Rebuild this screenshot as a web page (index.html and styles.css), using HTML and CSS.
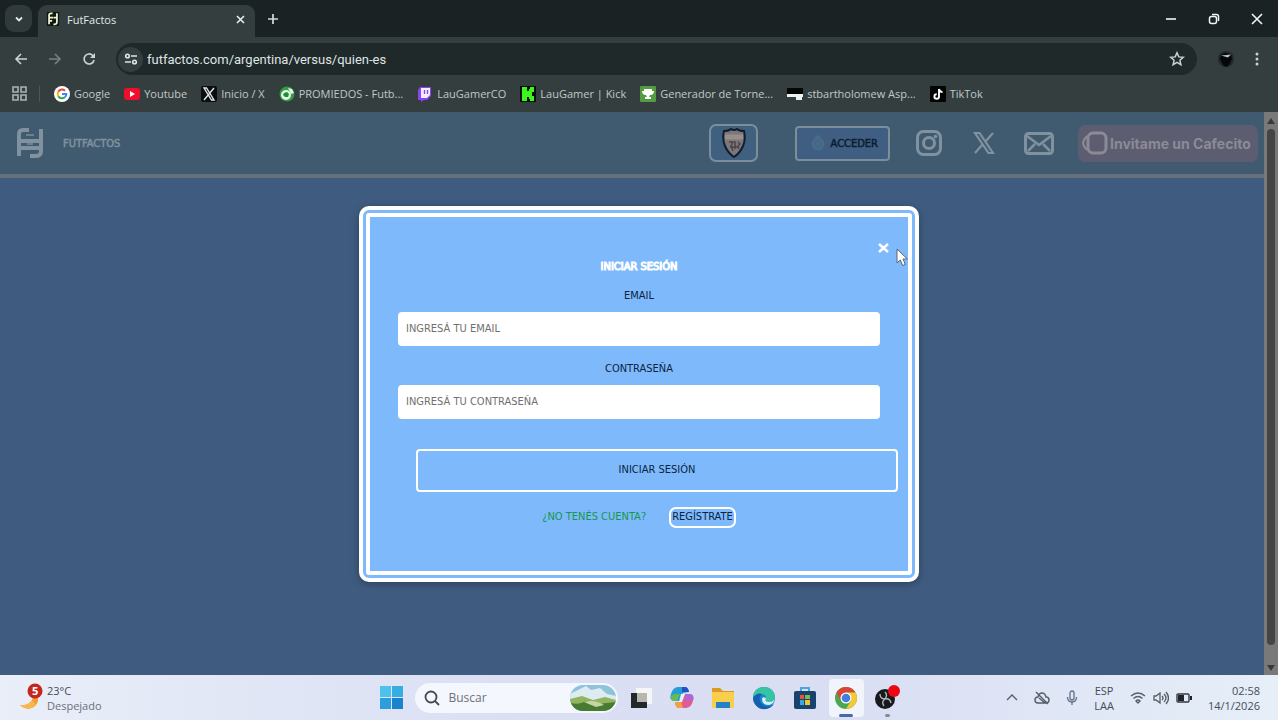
FILE: index.html
```html
<!DOCTYPE html>
<html lang="es">
<head>
  <meta charset="UTF-8">
  <meta name="viewport" content="width=device-width, initial-scale=1.0">
  <title>FutFactos</title>
  <link rel="stylesheet" href="styles.css">
</head>
<body>
  <!-- Tabs -->
  <div class="tab-strip">
    <button class="tab-search" aria-label="Buscar pestañas"><svg width="10" height="10" viewBox="0 0 10 10"><path d="M2 3.5l3 3 3-3" fill="none" stroke="#e3e8e8" stroke-width="1.8"/></svg></button>
    <div class="tab">
      <svg width="14" height="14" viewBox="0 0 28 32"><rect width="28" height="32" fill="#10170f"/><path d="M5 28V7q0-4 5-4h3M5 13h9M5 20h7M23 3v20q0 5-5 5h-3M15 13h8" fill="none" stroke="#f0f5d5" stroke-width="4"/></svg>
      <span>FutFactos</span>
      <button class="icon-btn" aria-label="Cerrar pestaña"><svg width="9" height="9" viewBox="0 0 9 9"><path d="M1 1l7 7M8 1L1 8" stroke="#e8eded" stroke-width="1.6"/></svg></button>
    </div>
    <button class="icon-btn new-tab" aria-label="Nueva pestaña"><svg width="12" height="12" viewBox="0 0 12 12"><path d="M6 1v10M1 6h10" stroke="#d5dbdb" stroke-width="1.7"/></svg></button>
    <div class="window-buttons">
      <button class="icon-btn" aria-label="Minimizar"><svg width="12" height="12" viewBox="0 0 12 12"><path d="M1 6h10" stroke="#f2f5f5" stroke-width="1.6"/></svg></button>
      <button class="icon-btn" aria-label="Restaurar"><svg width="12" height="12" viewBox="0 0 12 12"><rect x="1.5" y="3.5" width="7" height="7" rx="2" fill="none" stroke="#f2f5f5" stroke-width="1.5"/><path d="M4 1.5h4.5q2 0 2 2V8" fill="none" stroke="#f2f5f5" stroke-width="1.5"/></svg></button>
      <button class="icon-btn" aria-label="Cerrar"><svg width="12" height="12" viewBox="0 0 12 12"><path d="M1 1l10 10M11 1L1 11" stroke="#f2f5f5" stroke-width="1.6"/></svg></button>
    </div>
  </div>

  <!-- Toolbar -->
  <div class="toolbar">
    <button class="icon-btn" aria-label="Atrás"><svg width="14" height="14" viewBox="0 0 14 14"><path d="M13 7H2M7 2L2 7l5 5" fill="none" stroke="#ccd3d3" stroke-width="1.6"/></svg></button>
    <button class="icon-btn" aria-label="Adelante"><svg width="14" height="14" viewBox="0 0 14 14"><path d="M1 7h11M7 2l5 5-5 5" fill="none" stroke="#778181" stroke-width="1.6"/></svg></button>
    <button class="icon-btn" aria-label="Recargar"><svg width="14" height="14" viewBox="0 0 14 14"><path d="M12 8a5 5 0 1 1-1.3-4.5L12 5" fill="none" stroke="#ccd3d3" stroke-width="1.7"/><path d="M13 1v5H8z" fill="#ccd3d3"/></svg></button>
    <div class="address-bar">
      <button class="site-info" aria-label="Información del sitio"><svg width="14" height="12" viewBox="0 0 14 12"><g fill="none" stroke="#dfe4e4" stroke-width="1.6"><circle cx="3.5" cy="3" r="1.8"/><path d="M7 3h6M1 9h6"/><circle cx="10.5" cy="9" r="1.8"/></g></svg></button>
      <input type="text" value="futfactos.com/argentina/versus/quien-es" aria-label="Dirección">
      <button class="icon-btn" aria-label="Favorito"><svg width="16" height="16" viewBox="0 0 16 16"><path d="M8 1.8l1.8 4.1 4.5.4-3.4 3 1 4.400L8 11.400l-3.900 2.300 1-4.400-3.400-3 4.500-.4z" fill="none" stroke="#ccd3d3" stroke-width="1.5"/></svg></button>
    </div>
    <button class="icon-btn" aria-label="Perfil"><svg width="18" height="18" viewBox="0 0 18 18"><circle cx="9" cy="9" r="8" fill="#20282a"/><path d="M4 5q5-4 10 0l1 4-3 6-3 2-3-2-3-6z" fill="#050708"/><path d="M4 5.5l10-1-3 3z" fill="#b9bfc4"/></svg></button>
    <button class="icon-btn" aria-label="Menú"><svg width="4" height="14" viewBox="0 0 4 14"><g fill="#ccd3d3"><circle cx="2" cy="2" r="1.5"/><circle cx="2" cy="7" r="1.5"/><circle cx="2" cy="12" r="1.5"/></g></svg></button>
  </div>

  <!-- Bookmarks -->
  <nav class="bookmarks">
    <button class="icon-btn apps" aria-label="Aplicaciones"><svg width="15" height="15" viewBox="0 0 15 15"><path d="M1 1h5v5H1zM9 1h5v5H9zM1 9h5v5H1zM9 9h5v5H9z" fill="none" stroke="#aab4b3" stroke-width="1.6"/></svg></button>
    <a href="#"><svg width="16" height="16" viewBox="0 0 16 16"><circle cx="8" cy="8" r="8" fill="#fff"/><g fill="none" stroke-width="2"><path d="M4.3 5.8A4.3 4.3 0 0 1 11 4.7" stroke="#e94235"/><path d="M4.3 5.8a4.3 4.3 0 0 0 0 4.4" stroke="#fabb05"/><path d="M4.3 10.2a4.3 4.3 0 0 0 6.5 1.1" stroke="#34a853"/><path d="M10.8 11.3A4 4 0 0 0 12.3 8H8" stroke="#4285f4"/></g></svg>Google</a>
    <a href="#"><svg width="16" height="16" viewBox="0 0 16 16"><rect y="2" width="16" height="12" rx="3" fill="#f00d2e"/><path d="M6 5v6l5-3z" fill="#fff"/></svg>Youtube</a>
    <a href="#"><svg width="16" height="16" viewBox="0 0 16 16"><rect width="16" height="16" rx="2" fill="#0a0d0d"/><path d="M3 2h2.5L13 14h-2.5zM13 2L3 14" fill="none" stroke="#dfe4e4" stroke-width="1.4"/></svg>Inicio / X</a>
    <a href="#"><svg width="16" height="16" viewBox="0 0 16 16"><circle cx="8" cy="8" r="7.5" fill="#2e9d45"/><circle cx="7" cy="9" r="5" fill="#e4f6e2"/><path d="M5 7l3-1 2 2-1 3H6L4 9z" fill="#258a3b"/><path d="M9 2l4 1 2 4-3 1z" fill="#e4f6e2"/></svg>PROMIEDOS - Futb...</a>
    <a href="#"><svg width="16" height="16" viewBox="0 0 16 16"><path d="M3 1h11v9l-4 4H7l-3 2v-2H1V4z" fill="#8b45f0"/><path d="M4 2h9v7l-3 3H4z" fill="#f3edff"/><path d="M7.5 4v4M10.5 4v4" stroke="#8b45f0" stroke-width="1.3"/></svg>LauGamerCO</a>
    <a href="#"><svg width="16" height="16" viewBox="0 0 16 16"><rect width="16" height="16" fill="#061006"/><path d="M2 1h5v4h2V3h1V1h4v5h-2v4h2v5h-4v-2H9v-2H7v4H2z" fill="#3cf51c"/></svg>LauGamer | Kick</a>
    <a href="#"><svg width="16" height="16" viewBox="0 0 16 16"><rect width="16" height="16" rx="1" fill="#559b42"/><path d="M4 3h8v2h2q0 4-4 4l-1 2h2v2H5v-2h2L6 9Q2 9 2 5h2z" fill="#fff"/></svg>Generador de Torne...</a>
    <a href="#"><svg width="16" height="16" viewBox="0 0 16 16"><path d="M0 2h16v6H0z" fill="#050707"/><path d="M0 8h16v3h-1v3H9v-3H0z" fill="#eef1f1"/></svg>stbartholomew Asp...</a>
    <a href="#"><svg width="16" height="16" viewBox="0 0 16 16"><rect width="16" height="16" rx="1" fill="#020303"/><path d="M9 3v7.5a2.300 2.300 0 1 1-2.300-2.300M9 3q.5 3 3.500 3" fill="none" stroke="#fff" stroke-width="1.9"/></svg>TikTok</a>
  </nav>

  <!-- Site -->
  <main class="page">
    <div class="site">
      <header class="site-header">
        <a class="brand" href="#">
          <svg width="28" height="32" viewBox="0 0 28 32"><path d="M3 29V7q0-4 4-4h6M25 2v22q0 5-5 5h-6M3 14h22M5 21h18" fill="none" stroke="#80919f" stroke-width="4"/><path d="M10 8h8M11 17h6" stroke="#6b7f8f" stroke-width="2"/></svg>
          <span>FUTFACTOS</span>
        </a>
        <div class="header-actions">
          <button class="team" aria-label="Equipo"><svg width="26" height="30" viewBox="0 0 26 30"><path d="M3 3q5 0 7-2 3 2 6 0 2 2 7 2 2 8-1 15-3 7-9 11-6-4-9-11Q1 11 3 3z" fill="#7e7779" stroke="#111e30" stroke-width="2"/><path d="M4 9h18" stroke="#978f8c" stroke-width="5"/><path d="M8 14h4l-2 4 2 5M14 13v8M17 14l2 2-2 2 1 3M9 19h8" fill="none" stroke="#4b464c" stroke-width="1.5"/></svg></button>
          <button class="login"><svg width="14" height="16" viewBox="0 0 14 16"><circle cx="7" cy="9" r="5.5" fill="#456788" stroke="#4a6f88" stroke-width="1.5"/><path d="M4 3l3-2 3 2M5 9h4" stroke="#4a6f88" fill="none" stroke-width="1.5"/></svg>ACCEDER</button>
          <a class="social" href="#" aria-label="Instagram"><svg width="26" height="26" viewBox="0 0 26 26"><rect x="1.5" y="1.5" width="23" height="23" rx="6" fill="none" stroke="#80919f" stroke-width="3"/><circle cx="13" cy="13" r="5.5" fill="none" stroke="#80919f" stroke-width="3"/><circle cx="19.5" cy="6.5" r="1.8" fill="#80919f"/></svg></a>
          <a class="social" href="#" aria-label="X"><svg width="22" height="22" viewBox="0 0 22 22"><path d="M2 1h4.500L20 21h-4.500zM20 1l-7.500 8.500M9.500 12.500L2 21" fill="none" stroke="#80919f" stroke-width="2.2"/></svg></a>
          <a class="social" href="#" aria-label="Correo"><svg width="30" height="23" viewBox="0 0 30 23"><rect x="1.5" y="1.5" width="27" height="20" rx="3" fill="none" stroke="#80919f" stroke-width="3"/><path d="M3 4l12 9L27 4M4 19l7-7M26 19l-7-7" fill="none" stroke="#80919f" stroke-width="2.5"/></svg></a>
          <a class="cafecito" href="#"><svg width="26" height="24" viewBox="0 0 26 24"><rect x="6" y="2" width="18" height="20" rx="5" fill="none" stroke="#8d8a97" stroke-width="3"/><path d="M6 5q-4 2-5 7 1 5 5 7" fill="none" stroke="#8d8a97" stroke-width="2"/></svg>Invitame un Cafecito</a>
        </div>
      </header>
    </div>
    <div class="scrollbar">
      <svg width="10" height="8" viewBox="0 0 10 8"><path d="M5 1l4 6H1z" fill="#373a3c"/></svg>
      <div class="scroll-thumb"></div>
      <svg width="10" height="8" viewBox="0 0 10 8"><path d="M5 7L1 1h8z" fill="#373a3c"/></svg>
    </div>

    <!-- Login modal -->
    <div class="overlay">
      <div class="modal" role="dialog" aria-labelledby="modal-title">
        <button class="modal-close" aria-label="Cerrar"><svg width="11" height="10" viewBox="0 0 11 10"><path d="M1 1l9 8M10 1L1 9" stroke="#fff" stroke-width="2.5"/></svg></button>
        <h2 id="modal-title">INICIAR SESIÓN</h2>
        <form>
          <label for="email">EMAIL</label>
          <input type="email" id="email" placeholder="INGRESÁ TU EMAIL">
          <label for="password">CONTRASEÑA</label>
          <input type="password" id="password" placeholder="INGRESÁ TU CONTRASEÑA">
          <button type="button" class="submit">INICIAR SESIÓN</button>
        </form>
        <div class="register">
          <span>¿NO TENÉS CUENTA?</span>
          <button>REGÍSTRATE</button>
        </div>
        <svg class="cursor" width="12" height="19" viewBox="0 0 12 19"><path d="M1 1v14l3.300-3 2.400 5.500 2.600-1.100L7 11h4.300z" fill="#fff" stroke="#5a6672"/></svg>
      </div>
    </div>
  </main>

  <!-- Taskbar -->
  <footer class="taskbar">
    <div class="weather">
      <svg width="26" height="30" viewBox="0 0 26 30"><path d="M15 8q9 8 2 15-7 6-15-1 9 1 12-5 2-4 1-9z" fill="#f39b36"/><path d="M2 22q9 1 12-5l4 5q-7 7-16 0z" fill="#f8b64e"/><circle cx="17" cy="8" r="7.5" fill="#c3271f"/></svg>
      <span class="badge">5</span>
      <div>23°C<br><span class="muted">Despejado</span></div>
    </div>
    <div class="dock">
      <button class="dock-item" aria-label="Inicio"><svg width="23" height="23" viewBox="0 0 23 23"><path d="M0 0h11v11H0z" fill="#4cc3ec"/><path d="M12 0h11v11H12z" fill="#36aee2"/><path d="M0 12h11v11H0z" fill="#2c9edb"/><path d="M12 12h11v11H12z" fill="#1b83cc"/></svg></button>
      <div class="search">
        <svg width="16" height="16" viewBox="0 0 16 16"><circle cx="7" cy="7" r="5.5" fill="none" stroke="#454a50" stroke-width="1.8"/><path d="M11 11l4 4" stroke="#454a50" stroke-width="1.8"/></svg>
        <input type="text" placeholder="Buscar" aria-label="Buscar">
        <svg width="46" height="26" viewBox="0 0 46 26"><clipPath id="pic"><rect width="46" height="26" rx="13"/></clipPath><g clip-path="url(#pic)"><path d="M0 0h46v26H0z" fill="#8fc3dc"/><path d="M8 5l8-4 5 4 9-2 7 6 9 2v5H0V9z" fill="#dcecf0"/><path d="M0 14l12-3 11 4 12-3 11 3v11H0z" fill="#91b45f"/><path d="M0 18q9 2 14-1t14 2l18-2v9H0z" fill="#467b31"/><path d="M14 17q10-3 20 3l-8 2z" fill="#c5d5a5"/></g></svg>
      </div>
      <button class="dock-item" aria-label="Vista de tareas"><svg width="22" height="22" viewBox="0 0 22 22"><path d="M6 1h16v16H6z" fill="#f5f6f7"/><path d="M1 6h16v15H1z" fill="#25282a"/><path d="M7 6h10v9H7z" fill="#b9b6af"/></svg></button>
      <button class="dock-item" aria-label="Copilot"><svg width="24" height="23" viewBox="0 0 24 23"><path d="M8 1h7q3 0 4 5l-6 1-3 8H4q-5-1-3-7 2-7 7-7z" fill="#239fd5"/><path d="M4 8h6l-3 7H4q-5-1-3-5z" fill="#65bb57"/><path d="M12 1h3q3 0 4 5h-7z" fill="#2352c6"/><path d="M16 22H9q-3 0-4-5h6l3-9h6q5 1 3 7-2 7-7 7z" fill="#df5c98"/><path d="M5 16h6l2 6H9q-3 0-4-6z" fill="#f3a13e"/><path d="M15 8h5q4 1 3 6h-7z" fill="#a968d6"/><path d="M11 8h4l-3 8H9z" fill="#edf0fb"/></svg></button>
      <button class="dock-item" aria-label="Explorador"><svg width="24" height="22" viewBox="0 0 24 22"><path d="M1 1h8l3 3h11v5H1z" fill="#d99b22"/><rect x="1" y="5" width="22" height="16" rx="1" fill="#f9ce4d"/><path d="M5 15h14v6H5z" fill="#2480c7"/></svg></button>
      <button class="dock-item" aria-label="Edge"><svg width="24" height="24" viewBox="0 0 24 24"><circle cx="12" cy="12" r="11" fill="#1686cb"/><path d="M1 11Q2 1 12 1t11 10q0 5-6 5-5 0-3-4 0-4-5-4-5 0-8 3z" fill="#38c3a5"/><path d="M1 12q4-6 9-4-5 5 0 10t12 0Q18 24 10 23 2 21 1 12z" fill="#145fae"/><path d="M14 12q-2 4 3 4 5 0 6-4-1 6-6 7-7 0-7-6 0-3 4-1z" fill="#d7effa"/></svg></button>
      <button class="dock-item" aria-label="Store"><svg width="22" height="24" viewBox="0 0 22 24"><path d="M7 6V2h8v4" fill="none" stroke="#48a8d8" stroke-width="2"/><rect y="5" width="22" height="18" rx="2" fill="#17436e"/><path d="M6 9h4v4H6z" fill="#e95234"/><path d="M11 9h5v4h-5z" fill="#80bd39"/><path d="M6 14h4v5H6z" fill="#38a7e4"/><path d="M11 14h5v5h-5z" fill="#f5c33b"/></svg></button>
      <button class="dock-item active" aria-label="Chrome"><svg width="24" height="24" viewBox="0 0 24 24"><circle cx="12" cy="12" r="11" fill="#4aa851"/><path d="M2.500 6.500A11 11 0 0 1 21.500 6.500H12l-5 8.500z" fill="#dc4437"/><path d="M21.500 6.500A11 11 0 0 1 12 23l5-8.500-5-8z" fill="#f7c833"/><circle cx="12" cy="12" r="5.5" fill="#fff"/><circle cx="12" cy="12" r="4.3" fill="#3e7fe0"/></svg></button>
      <button class="dock-item running" aria-label="OBS"><svg width="26" height="26" viewBox="0 0 26 26"><circle cx="11" cy="14" r="10" fill="#17191b"/><path d="M6 9q0 5 5 5 3-4 0-7M11 14q-4 3-1 7M11 14q5-1 6 4" fill="none" stroke="#b4b7ba" stroke-width="1.4"/><circle cx="20" cy="6" r="6" fill="#ee0712"/></svg></button>
    </div>
    <div class="tray">
      <svg width="12" height="12" viewBox="0 0 12 12"><path d="M1 8l5-5 5 5" fill="none" stroke="#555d66" stroke-width="1.4"/></svg>
      <svg width="16" height="14" viewBox="0 0 16 14"><path d="M4 12q-3 0-3-3t3-3q1-4 4-4t4 4q3 0 3 3t-3 3zM2 1l12 12M5 7l6 5" fill="none" stroke="#555d66" stroke-width="1.4"/></svg>
      <svg width="12" height="16" viewBox="0 0 12 16"><rect x="4" y="1" width="4" height="9" rx="2" fill="none" stroke="#607087" stroke-width="1.3"/><path d="M1.500 7q0 5 4.500 5t4.500-5M6 12v3" fill="none" stroke="#607087" stroke-width="1.3"/></svg>
      <div class="lang">ESP<br>LAA</div>
      <div class="status">
        <svg width="16" height="13" viewBox="0 0 16 13"><path d="M1 5q7-6 14 0M3.500 7.500q4.500-4 9 0M6 10q2-2 4 0l-2 2z" fill="none" stroke="#555d66" stroke-width="1.4"/></svg>
        <svg width="16" height="14" viewBox="0 0 16 14"><path d="M1 5h2l4-3v10L3 9H1zM9 5q2 2 0 4M11 3q4 4 0 8M13 1q5 6 0 12" fill="none" stroke="#555d66" stroke-width="1.3"/></svg>
        <svg width="16" height="12" viewBox="0 0 16 12"><rect x="1" y="2" width="12" height="8" rx="1" fill="none" stroke="#34393e" stroke-width="1.4"/><path d="M2 3h6v6H2zM14 4h2v4h-2z" fill="#202428"/></svg>
      </div>
      <div class="clock">02:58<br>14/1/2026</div>
    </div>
  </footer>
</body>
</html>
```
FILE: styles.css
```css
/* General */
* {
  box-sizing: border-box;
}

body {
  margin: 0;
  height: 100vh;
  display: flex;
  flex-direction: column;
  overflow: hidden;
  background: #343e3f;
  font-family: 'Open Sans', 'Noto Sans', sans-serif;
  font-size: 11px;
}

button,
input {
  font: inherit;
  color: inherit;
  margin: 0;
  padding: 0;
  border: none;
  background: none;
}

a {
  color: inherit;
  text-decoration: none;
}

svg {
  display: block;
  flex: none;
}

.icon-btn {
  display: flex;
  align-items: center;
  justify-content: center;
}

/* Tab strip */
.tab-strip {
  display: flex;
  height: 37px;
  padding-left: 5px;
  background: #1a2223;
  color: #e3e8e8;
}

.tab-search {
  width: 27px;
  height: 27px;
  margin-top: 5px;
  border-radius: 9px;
  background: #303a3b;
  display: grid;
  place-items: center;
}

.tab {
  display: flex;
  align-items: center;
  gap: 7px;
  width: 217px;
  height: 32px;
  margin: 5px 0 0 6px;
  padding: 0 10px 4px 8px;
  border-radius: 9px 9px 0 0;
  background: #343e3f;
}

.tab .icon-btn {
  margin-left: auto;
}

.new-tab {
  width: 36px;
}

.window-buttons {
  display: flex;
  margin-left: auto;
}

.window-buttons .icon-btn {
  width: 43px;
}

/* Toolbar */
.toolbar {
  display: flex;
  align-items: center;
  gap: 20px;
  height: 44px;
  padding: 0 19px 0 14px;
}

.address-bar {
  flex: 1;
  display: flex;
  align-items: center;
  gap: 4px;
  height: 32px;
  padding: 0 12px 0 2px;
  border-radius: 16px;
  background: #20292a;
  color: #dfe4e4;
  font-family: Roboto, sans-serif;
  font-size: 13px;
}

.address-bar input {
  flex: 1;
}

.site-info {
  width: 25px;
  height: 25px;
  border-radius: 50%;
  background: #343e3f;
  display: grid;
  place-items: center;
}

/* Bookmarks bar */
.bookmarks {
  display: flex;
  align-items: center;
  gap: 14px;
  height: 31px;
  padding: 0 12px 6px;
  color: #c0c8c7;
}

.bookmarks a {
  display: flex;
  align-items: center;
  gap: 4px;
  white-space: nowrap;
}

.apps {
  height: 16px;
  padding-right: 12px;
  border-right: 1px solid #4c5757;
}

/* Site */
.page {
  position: relative;
  flex: 1;
  display: flex;
  background: #3f5c80;
  font-family: 'DejaVu Sans Condensed', sans-serif;
}

.site {
  flex: 1;
}

.site-header {
  display: flex;
  align-items: center;
  justify-content: space-between;
  height: 66px;
  padding: 0 6px 0 16px;
  border-bottom: 4px solid #65717d;
  background: #405b70;
}

.brand {
  display: flex;
  align-items: center;
  gap: 19px;
  color: #80919f;
}

.header-actions {
  display: flex;
  align-items: center;
  gap: 23px;
}

.team {
  width: 49px;
  height: 38px;
  margin-right: 14px;
  border: 2px solid #7c8d9b;
  border-radius: 7px;
  background: #406080;
  display: grid;
  place-items: center;
}

.login {
  display: flex;
  align-items: center;
  justify-content: space-between;
  width: 95px;
  height: 35px;
  padding: 0 10px 0 14px;
  border: 2px solid #7c8d9b;
  border-radius: 4px;
  background: #405e82;
  color: #0c1d31;
}

.brand span,
.login {
  -webkit-text-stroke: 0.5px;
}

.social {
  display: flex;
  justify-content: center;
  width: 32px;
}

.cafecito {
  display: flex;
  align-items: center;
  gap: 2px;
  width: 180px;
  height: 37px;
  padding: 0 4px;
  border-radius: 7px;
  background: #5c5d70;
  color: #8d8a97;
  font-family: Inter, sans-serif;
  font-size: 14px;
  font-weight: bold;
  white-space: nowrap;
}

.scrollbar {
  display: flex;
  flex-direction: column;
  align-items: center;
  gap: 4px;
  width: 14px;
  padding: 5px 0 3px;
  background: #797979;
}

.scroll-thumb {
  flex: 1;
  width: 8px;
  margin-bottom: 15px;
  border-radius: 4px;
  background: #454545;
}

/* Modal */
.overlay {
  position: absolute;
  inset: 0;
  display: grid;
  place-items: center;
}

.modal {
  position: relative;
  width: 560px;
  padding: 40px 28px 43px;
  border: 11px double #fff;
  border-radius: 10px;
  background: #7ebafb;
  box-shadow: 0 2px 8px rgba(0, 0, 0, 0.3);
  color: #0c2340;
  line-height: 20px;
  text-align: center;
}

.modal h2 {
  margin: 0 0 9px;
  color: #fff;
  font-size: 11px;
  font-weight: normal;
  -webkit-text-stroke: 1px #fff;
}

.modal form {
  display: flex;
  flex-direction: column;
}

.modal label {
  margin-bottom: 6px;
}

.modal input {
  height: 34px;
  margin-bottom: 13px;
  padding: 0 8px;
  border-radius: 4px;
  background: #fff;
}

.modal input::placeholder {
  color: #6f6f6f;
}

.submit {
  width: 100%;
  height: 43px;
  margin: 17px 0 15px 18px;
  border: 2px solid #fff;
  border-radius: 4px;
}

.register {
  display: flex;
  align-items: center;
  justify-content: center;
  gap: 23px;
}

.register span {
  color: #16964d;
}

.register button {
  height: 21px;
  padding: 0 1px;
  border: 2px solid #fff;
  border-radius: 7px;
  line-height: 16px;
}

.modal-close {
  position: absolute;
  top: 26px;
  right: 19px;
}

.cursor {
  position: absolute;
  top: 31px;
  right: 0;
}

/* Taskbar */
.taskbar {
  display: grid;
  grid-template-columns: 1fr auto 1fr;
  align-items: center;
  height: 45px;
  background: linear-gradient(90deg, #e9eef9, #dadff3 40%, #d9def3 65%, #e6eef8);
  color: #454c56;
  line-height: 15px;
}

.weather {
  position: relative;
  display: flex;
  align-items: center;
  gap: 3px;
  padding-left: 18px;
}

.badge {
  position: absolute;
  top: 0;
  left: 32px;
  color: #fff;
  font-weight: bold;
}

.muted {
  color: #6a717b;
}

.dock {
  display: flex;
  align-items: center;
  gap: 6px;
}

.dock-item {
  position: relative;
  width: 35px;
  height: 38px;
  border-radius: 4px;
  display: grid;
  place-items: center;
}

.active {
  background: #f2f4fb;
}

.active::after,
.running::after {
  content: '';
  position: absolute;
  bottom: 0;
  width: 14px;
  height: 3px;
  border-radius: 2px;
  background: #4669ae;
}

.running::after {
  width: 5px;
  background: #858b98;
}

.search {
  display: flex;
  align-items: center;
  gap: 9px;
  width: 203px;
  height: 30px;
  padding: 0 2px 0 9px;
  border-radius: 15px;
  background: #f4f7fd;
  font-size: 12px;
}

.search input {
  flex: 1;
  min-width: 0;
}

.search input::placeholder {
  color: #6d7177;
}

.tray {
  display: flex;
  align-items: center;
  justify-content: flex-end;
  gap: 16px;
  padding-right: 18px;
}

.lang {
  text-align: center;
}

.status {
  display: flex;
  align-items: center;
  gap: 7px;
}

.clock {
  text-align: right;
}
```
